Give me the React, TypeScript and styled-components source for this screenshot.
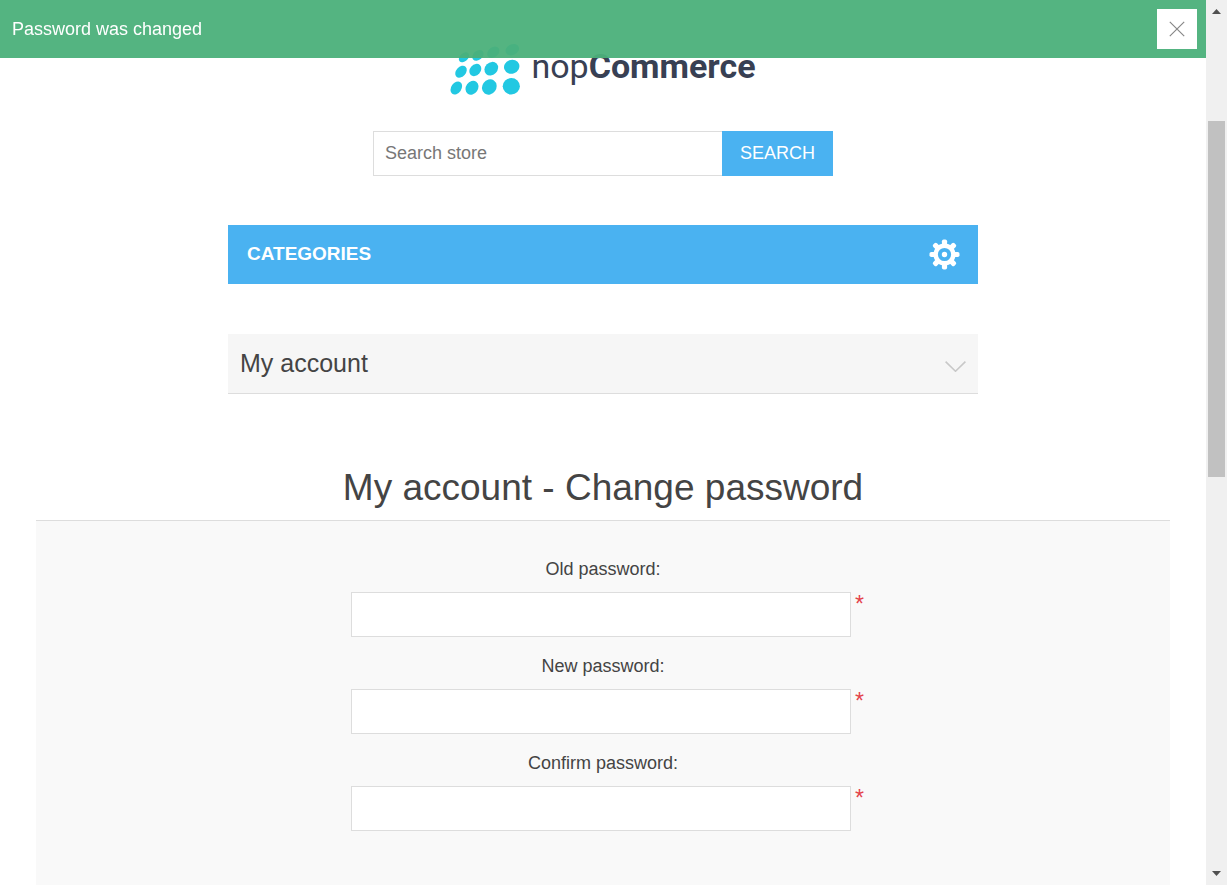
import React from "react";
import styled, { createGlobalStyle } from "styled-components";

const GlobalStyle = createGlobalStyle`
  *, *::before, *::after { box-sizing: border-box; }
  body {
    margin: 0;
    background: #fff;
    color: #444;
    font-family: "Liberation Sans", Arial, sans-serif;
    font-size: 18px;
    line-height: 24px;
  }
  button, input { font: inherit; border-radius: 0; margin: 0; }
`;

const Shell = styled.div`
  display: grid;
  grid-template-columns: 1fr 21px;
  align-items: stretch;
  min-height: 100vh;
`;

const Page = styled.div`
  display: flex;
  flex-direction: column;
  align-items: center;
  padding-top: 43px;
`;

const Notification = styled.div`
  position: fixed;
  top: 0;
  left: 0;
  right: 21px;
  z-index: 10;
  display: flex;
  align-items: center;
  justify-content: space-between;
  height: 58px;
  padding: 0 9px 0 12px;
  background: rgba(75, 176, 122, 0.95);
  color: #fff;
`;

const CloseButton = styled.button`
  display: flex;
  align-items: center;
  justify-content: center;
  width: 40px;
  height: 40px;
  padding: 0;
  border: 0;
  background: #fff;
`;

const Logo = styled.a`
  display: flex;
  align-items: flex-start;
  gap: 10px;
  height: 53px;
  color: #384053;
  font-family: Roboto, "Open Sans", sans-serif;
  font-size: 34px;
  line-height: 46px;
  text-decoration: none;
`;

const SearchForm = styled.form`
  display: flex;
  width: 100%;
  max-width: 460px;
  height: 45px;
  margin-top: 35px;
`;

const SearchInput = styled.input`
  flex: 1;
  min-width: 0;
  padding: 0 11px 2px;
  border: 1px solid #ddd;
  border-right: 0;
  background: #fff;
  &::placeholder { color: #777; opacity: 1; }
`;

const SearchButton = styled.button`
  width: 111px;
  padding: 0 0 2px;
  border: 0;
  background: #4ab2f1;
  color: #fff;
  text-transform: uppercase;
`;

const CategoriesBar = styled.button`
  display: flex;
  align-items: center;
  justify-content: space-between;
  width: 100%;
  max-width: 750px;
  height: 59px;
  margin-top: 49px;
  padding: 0 18px 0 19px;
  border: 0;
  background: #4ab2f1;
  color: #fff;
  font-size: 19px;
  font-weight: bold;
  text-transform: uppercase;
`;

const BarText = styled.span`
  padding-bottom: 2px;
`;

const AccountBar = styled.button`
  display: flex;
  align-items: center;
  justify-content: space-between;
  width: 100%;
  max-width: 750px;
  height: 60px;
  margin-top: 50px;
  padding: 0 12px;
  border: 0;
  border-bottom: 1px solid #ddd;
  background: #f6f6f6;
  color: #444;
  font-size: 25px;
`;

const Chevron = styled.svg`
  margin-top: 4px;
`;

const Title = styled.h1`
  margin: 70px 0 0;
  font-size: 37px;
  font-weight: normal;
  line-height: 48px;
`;

const Panel = styled.form`
  flex: 1;
  width: 94%;
  margin-top: 8px;
  padding: 36px 0 54px;
  border-top: 1px solid #ddd;
  background: #f9f9f9;
`;

const Field = styled.div`
  display: flex;
  flex-direction: column;
  gap: 11px;
  margin-bottom: 17px;
`;

const FieldLabel = styled.label`
  text-align: center;
`;

const InputRow = styled.div`
  display: flex;
  justify-content: center;
  align-items: flex-start;
  gap: 4px;
  padding-left: 10px;
`;

const PasswordInput = styled.input`
  width: 100%;
  max-width: 500px;
  height: 45px;
  padding: 0 10px;
  border: 1px solid #ddd;
  background: #fff;
`;

const Required = styled.span`
  width: 10px;
  color: #e4434b;
  font-size: 23px;
  line-height: 24px;
`;

const ScrollColumn = styled.div`
  position: sticky;
  top: 0;
  display: flex;
  flex-direction: column;
  align-items: center;
  height: 100vh;
  background: #f0f0f0;
`;

const ScrollArrow = styled.svg`
  width: 21px;
  height: 21px;
  fill: #505050;
`;

const ScrollSpace = styled.div<{ $share: number }>`
  flex: ${(p) => p.$share} 0 0;
`;

const ScrollThumb = styled(ScrollSpace)`
  width: 17px;
  background: #c1c1c1;
`;

const logoDots = [
  [456.3, 88, 5.1, 7.1, 35],
  [472, 87.7, 6, 7.4, 35],
  [489.3, 87, 7, 8, 35],
  [511.3, 86.3, 8.6, 8.2, 0],
  [461, 71.7, 4.8, 6.8, 42],
  [475.3, 70, 5.3, 6.8, 42],
  [491.3, 68.7, 6.2, 7.4, 45],
  [511.7, 66.7, 7.8, 6.9, -20],
  [464, 57.3, 4, 6, 48],
  [478, 55.3, 4.6, 6.4, 50],
  [493.3, 52.3, 5, 6.8, 52],
  [512.3, 49.7, 7.1, 5.4, -25],
];

const fields = [
  { id: "old-password", label: "Old password:" },
  { id: "new-password", label: "New password:" },
  { id: "confirm-password", label: "Confirm password:" },
];

function Gear() {
  return (
    <svg width="31" height="31" viewBox="-15.5 -15.5 31 31" aria-hidden="true">
      <g fill="#fff">
        {[0, 45, 90, 135, 180, 225, 270, 315].map((a) => (
          <rect
            key={a}
            x="-2.6"
            y="-15"
            width="5.2"
            height="7"
            rx="1.8"
            transform={`rotate(${a})`}
          />
        ))}
      </g>
      <circle r="8.8" fill="none" stroke="#fff" strokeWidth="4.4" />
      <circle r="2.7" fill="#fff" />
    </svg>
  );
}

export default function App() {
  return (
    <>
      <GlobalStyle />
      <Notification role="status">
        <span>Password was changed</span>
        <CloseButton type="button" aria-label="Close">
          <svg width="16" height="16" viewBox="0 0 16 16" aria-hidden="true">
            <path d="M.8.8 15.2 15.2M15.2.8.8 15.2" stroke="#888" strokeWidth="1.2" />
          </svg>
        </CloseButton>
      </Notification>
      <Shell>
        <Page>
          <Logo href="#">
            <svg width="71" height="53" viewBox="450 43 71 53" aria-hidden="true">
              {logoDots.map(([x, y, rx, ry, angle]) => (
                <ellipse
                  key={`${x}-${y}`}
                  rx={rx}
                  ry={ry}
                  fill="#22c8e2"
                  transform={`translate(${x} ${y}) rotate(${angle})`}
                />
              ))}
            </svg>
            <span>
              nop<b>Commerce</b>
            </span>
          </Logo>
          <SearchForm onSubmit={(e) => e.preventDefault()}>
            <SearchInput type="text" placeholder="Search store" aria-label="Search store" />
            <SearchButton type="submit">Search</SearchButton>
          </SearchForm>
          <CategoriesBar type="button">
            <BarText>Categories</BarText>
            <Gear />
          </CategoriesBar>
          <AccountBar type="button">
            <BarText>My account</BarText>
            <Chevron width="21" height="12" viewBox="0 0 21 12" aria-hidden="true">
              <path d="M.6 1.6 10.5 11.2 20.4 1.6" fill="none" stroke="#c8c8c8" strokeWidth="1.6" />
            </Chevron>
          </AccountBar>
          <Title>My account - Change password</Title>
          <Panel onSubmit={(e) => e.preventDefault()}>
            {fields.map((f) => (
              <Field key={f.id}>
                <FieldLabel htmlFor={f.id}>{f.label}</FieldLabel>
                <InputRow>
                  <PasswordInput id={f.id} type="password" required />
                  <Required>*</Required>
                </InputRow>
              </Field>
            ))}
          </Panel>
        </Page>
        <ScrollColumn aria-hidden="true">
          <ScrollArrow viewBox="0 0 21 21">
            <path d="M6 14 10.5 9 15 14Z" />
          </ScrollArrow>
          <ScrollSpace $share={100} />
          <ScrollThumb $share={356} />
          <ScrollSpace $share={387} />
          <ScrollArrow viewBox="0 0 21 21">
            <path d="M6 7 10.5 12 15 7Z" />
          </ScrollArrow>
        </ScrollColumn>
      </Shell>
    </>
  );
}
